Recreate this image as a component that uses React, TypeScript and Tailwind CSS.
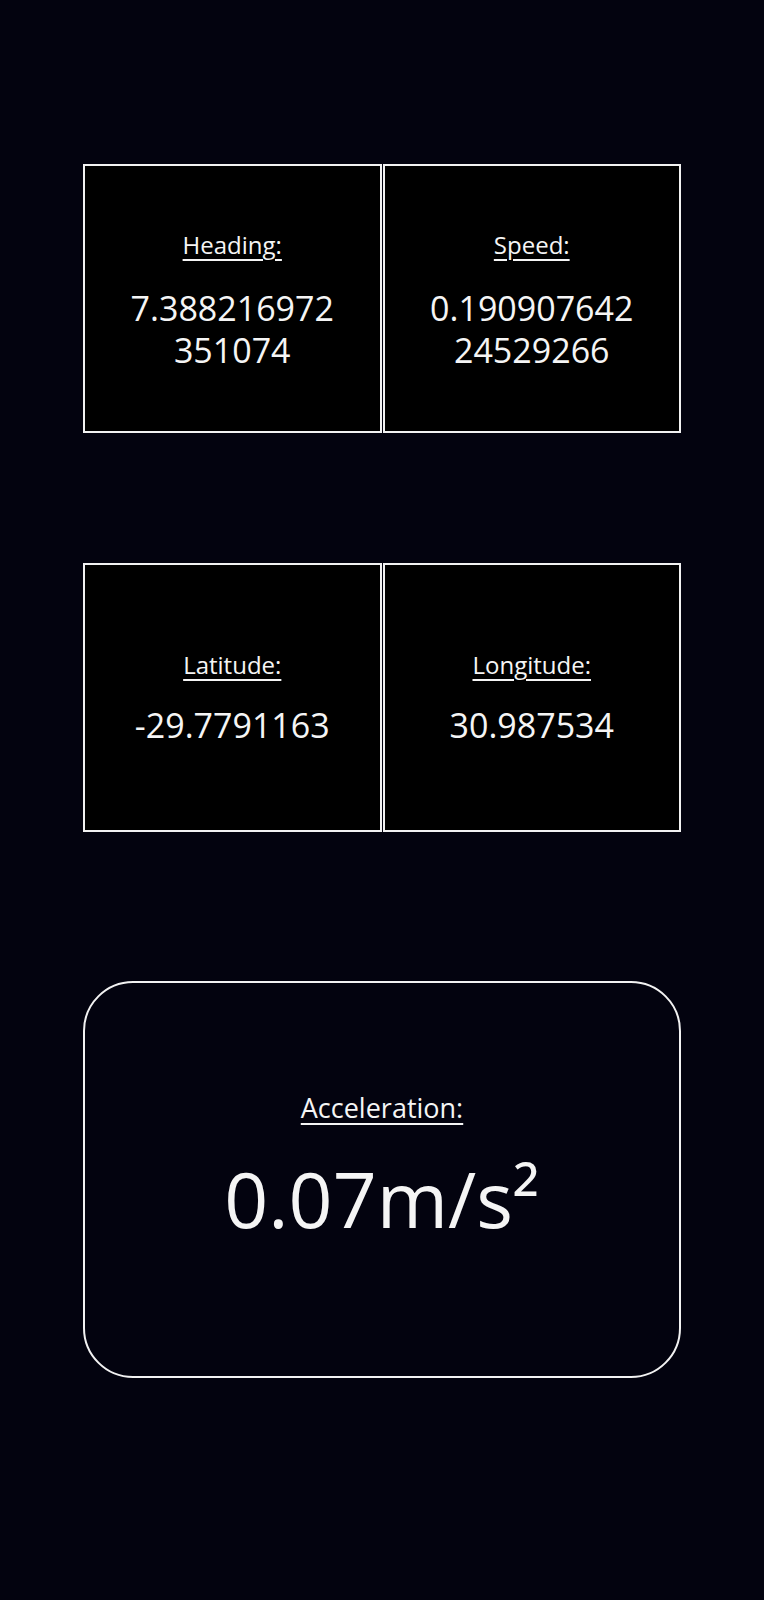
const stats = [
  [
    { label: "Heading:", lines: ["7.388216972", "351074"] },
    { label: "Speed:", lines: ["0.190907642", "24529266"] },
  ],
  [
    { label: "Latitude:", lines: ["-29.7791163"] },
    { label: "Longitude:", lines: ["30.987534"] },
  ],
];

function StatBox({ label, lines }: { label: string; lines: string[] }) {
  const twoLine = lines.length > 1;
  return (
    <div
      className={`flex flex-col items-center justify-center border-2 border-[#f2f2f2] bg-black ${
        twoLine ? "gap-[26px] pt-[2px]" : "gap-[23px] pb-[1px]"
      }`}
    >
      <span className="text-[24px] leading-[32px] underline decoration-[1.5px] underline-offset-[5px]">
        {label}
      </span>
      <div className="text-center text-[34px] leading-[42px]">
        {lines.map((line) => (
          <div key={line}>{line}</div>
        ))}
      </div>
    </div>
  );
}

export default function App() {
  return (
    <div
      className="min-h-[1600px] w-full bg-[#03030f] pt-[164px] text-[#f5f5f5]"
      style={{ fontFamily: '"Open Sans", "Noto Sans", sans-serif' }}
    >
      <div className="mx-auto flex w-[598px] flex-col gap-[130px]">
        {stats.map((row, i) => (
          <div key={i} className="grid h-[269px] grid-cols-2 gap-px">
            {row.map((s) => (
              <StatBox key={s.label} label={s.label} lines={s.lines} />
            ))}
          </div>
        ))}

        <div className="mt-[19px] flex h-[397px] flex-col items-center justify-center gap-[34px] rounded-[50px] border-2 border-[#f2f2f2] pb-[33px]">
          <span className="text-[27px] leading-[36px] underline decoration-[1.5px] underline-offset-[5px]">
            Acceleration:
          </span>
          <span className="text-[77px] leading-[77px]">0.07m/s²</span>
        </div>
      </div>
    </div>
  );
}
